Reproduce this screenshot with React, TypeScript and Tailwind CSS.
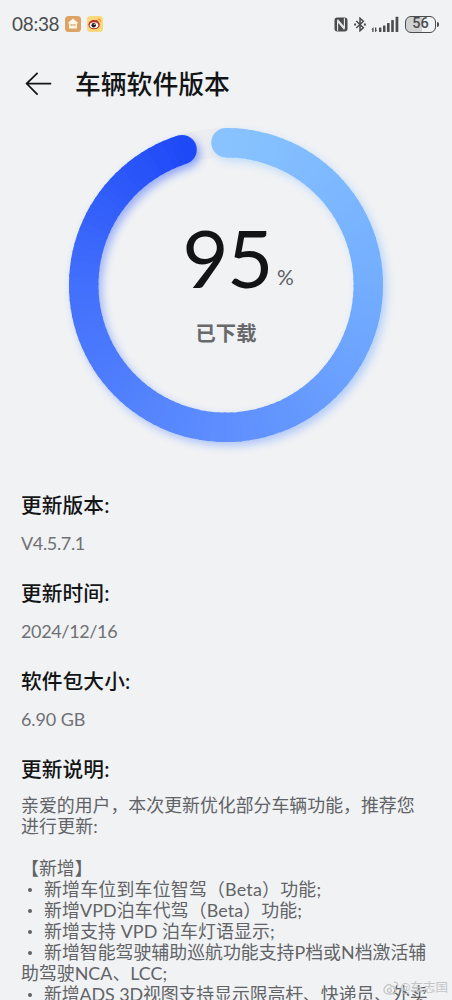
const PROGRESS = 95;
const CENTER = 180;
const RADIUS = 142.3;
const STEPS = 114;

// ring colours, clockwise from the top
const STOPS: [number, number[]][] = [
  [0, [136, 195, 255]],
  [0.26, [114, 172, 255]],
  [0.5, [94, 142, 254]],
  [0.75, [66, 111, 252]],
  [0.95, [30, 73, 247]],
];

const SECTIONS = [
  { title: '更新版本:', value: 'V4.5.7.1', tracking: 'tracking-[-0.35px]' },
  { title: '更新时间:', value: '2024/12/16', tracking: 'tracking-[-0.35px]' },
  { title: '软件包大小:', value: '6.90 GB', tracking: 'tracking-[-0.1px]' },
];

const NOTES = [
  { text: '亲爱的用户，本次更新优化部分车辆功能，推荐您', indent: false, tracking: '' },
  { text: '进行更新:', indent: false, tracking: 'tracking-[0.2px]' },
  { text: '', indent: false, tracking: '' },
  { text: '【新增】', indent: false, tracking: '' },
  { text: '新增车位到车位智驾（Beta）功能;', indent: true, tracking: 'tracking-[0.22px]' },
  { text: '新增VPD泊车代驾（Beta）功能;', indent: true, tracking: 'tracking-[0.1px]' },
  { text: '新增支持 VPD 泊车灯语显示;', indent: true, tracking: 'tracking-[0.1px]' },
  { text: '新增智能驾驶辅助巡航功能支持P档或N档激活辅', indent: true, tracking: '' },
  { text: '助驾驶NCA、LCC;', indent: false, tracking: '' },
  { text: '新增ADS 3D视图支持显示限高杆、快递员、外卖', indent: true, tracking: 'tracking-[-0.1px]' },
];

function colorAt(t: number) {
  let i = 0;
  while (i < STOPS.length - 2 && t > STOPS[i + 1][0]) i++;
  const [t0, c0] = STOPS[i];
  const [t1, c1] = STOPS[i + 1];
  const k = Math.min(1, (t - t0) / (t1 - t0));
  return `rgb(${c0.map((c, n) => Math.round(c + (c1[n] - c) * k)).join(',')})`;
}

function pointAt(t: number) {
  const a = t * Math.PI * 2;
  return { x: CENTER + RADIUS * Math.sin(a), y: CENTER - RADIUS * Math.cos(a) };
}

function Ring() {
  const total = PROGRESS / 100;
  const arcs = Array.from({ length: STEPS }, (_, i) => {
    const t = (i / STEPS) * total;
    const from = pointAt(t);
    const to = pointAt(Math.min(total, ((i + 1.3) / STEPS) * total));
    return { d: `M${from.x} ${from.y}A${RADIUS} ${RADIUS} 0 0 1 ${to.x} ${to.y}`, color: colorAt(t) };
  });
  const start = pointAt(0);
  const end = pointAt(total);

  return (
    <svg viewBox="0 0 360 360" className="col-start-1 row-start-1 h-[360px] w-[360px]">
      <defs>
        <filter id="glow" x="-10%" y="-10%" width="120%" height="120%">
          <feGaussianBlur stdDeviation="4" />
        </filter>
        <g id="arc" fill="none" strokeWidth="29.4">
          <circle cx={start.x} cy={start.y} r="14.7" fill={colorAt(0)} />
          <circle cx={end.x} cy={end.y} r="14.7" fill={colorAt(total)} />
          {arcs.map((a) => <path key={a.d} d={a.d} stroke={a.color} />)}
        </g>
      </defs>
      <circle cx={CENTER} cy={CENTER} r={RADIUS} fill="none" stroke="#ebedf0" strokeWidth="29.4" />
      <use href="#arc" x="3.5" y="4" filter="url(#glow)" opacity="0.45" />
      <use href="#arc" />
    </svg>
  );
}

function StatusBar() {
  return (
    <div className="flex h-12 items-center justify-between pl-3 pr-[13px] text-[#4b4c4e]">
      <div className="flex items-center">
        <span className="w-[48px] whitespace-nowrap text-[19px] tracking-[-0.3px]">08:38</span>
        <svg viewBox="0 0 16 16" className="ml-[5px] h-4 w-4">
          <rect width="16" height="16" rx="3.5" fill="#dca365" />
          <path d="M8 2.6 2.5 7.3h1.6v5.2h7.8V7.3h1.6z" fill="#fff7e8" />
          <path d="M6.2 8v2M8 8v2M9.8 8v2" stroke="#c98f50" strokeWidth=".9" />
        </svg>
        <svg viewBox="0 0 16 16" className="ml-[6px] h-4 w-4">
          <rect width="16" height="16" rx="3.5" fill="#fbd978" />
          <ellipse cx="7.1" cy="8.7" rx="5.7" ry="4.5" fill="#b9322b" />
          <path d="M3 5.8 6.2 3.7l1.5 1 2.4-.6.7 1.9z" fill="#b9322b" />
          <ellipse cx="7" cy="9.2" rx="4.3" ry="3" fill="#fff" />
          <circle cx="6.7" cy="9.2" r="2.2" fill="#29201e" />
          <circle cx="7.3" cy="8.5" r=".6" fill="#fff" />
          <path d="M10.4 3.2c2-.5 3.6 1 3.1 3" fill="none" stroke="#ef9a3c" strokeWidth="1.1" />
        </svg>
      </div>
      <div className="flex items-center">
        {/* NFC */}
        <svg viewBox="0 0 14 15" className="h-[15px] w-[14px]">
          <path d="M3.2.5h7.6a2.7 2.7 0 0 1 2.7 2.7v8.6a2.7 2.7 0 0 1-2.7 2.7H3.2A2.7 2.7 0 0 1 .5 11.8V3.2A2.7 2.7 0 0 1 3.2.5z" fill="currentColor" />
          <path d="M3.6 13.800V4.400l6.800 8M10.400 1.200v9.400l-6.800-8" fill="none" stroke="#f0f2f4" strokeWidth="1.1" />
        </svg>
        {/* Bluetooth */}
        <svg viewBox="0 0 12 15" className="ml-[6px] h-[15px] w-3" fill="none" stroke="currentColor" strokeWidth="1.5">
          <path d="m2.3 4 7 6.7L6 13.8V1.2l3.3 3.1-7 6.7" />
          <path d="M.1 7.5h2M9.9 7.5h2" strokeWidth="1.8" />
        </svg>
        {/* Signal */}
        <svg viewBox="0 0 28 17" className="ml-[5px] h-[17px] w-7" fill="currentColor">
          <path d="m2.1 11.5-1.8 2.1h1v2.5h1.3v-4.6zM4.5 16.1l1.8-2.1h-1v-2.5H4v4.6z" />
          <rect x="8" y="11.5" width="2.4" height="4.6" rx=".5" />
          <rect x="12" y="9.5" width="2.5" height="6.6" rx=".5" />
          <rect x="16" y="7" width="2.6" height="9.1" rx=".5" />
          <rect x="20.2" y="4" width="2.6" height="12.1" rx=".5" />
          <rect x="24.6" y="0.8" width="2.7" height="15.3" rx=".5" />
        </svg>
        <div className="ml-[6px] flex h-[17px] w-[31px] items-center justify-center rounded-[6px] border-[1.5px] border-[#4b4c4e] bg-linear-to-r from-[#cfd1d3] from-55% to-[#f0f2f4] to-55%">
          <span className="font-[Roboto,sans-serif] text-[14.5px] font-medium leading-none">56</span>
        </div>
        <div className="ml-px h-[5px] w-[2px] rounded-r bg-[#4b4c4e]" />
      </div>
    </div>
  );
}

export default function App() {
  return (
    <div className="relative h-[1000px] w-[452px] overflow-hidden bg-[#f0f2f4] font-[Lato,'Noto_Sans_CJK_SC',sans-serif] text-[#131415]">
      <StatusBar />

      <header className="flex h-[72px] items-center pl-[25px]">
        <svg viewBox="0 0 27 24" className="h-6 w-[27px]" fill="none" stroke="currentColor" strokeWidth="1.7">
          <path d="M12.6.8 1.6 11.6l11 11M1.6 11.6h24.6" />
        </svg>
        <h1 className="ml-[23px] mt-0.5 text-[25.8px] font-medium leading-none">车辆软件版本</h1>
      </header>

      <section className="-mt-[15px] grid h-[360px] w-[452px] justify-center">
        <Ring />
        <div className="col-start-1 row-start-1 flex flex-col items-center pt-[107px]">
          <div className="flex items-baseline pl-[24px]">
            <span className="text-[80px] leading-[90px] tracking-[-1.5px]">95</span>
            <span className="relative -top-[3px] ml-[5px] text-[21px] text-[#606164]">%</span>
          </div>
          <span className="mt-[18px] text-[20.3px] font-bold leading-[26px] text-[#68696b]">已下载</span>
        </div>
      </section>

      <main className="pl-[21px] pt-[27px]">
        {SECTIONS.map((s) => (
          <section key={s.title} className="h-[88px]">
            <h2 className="text-[20.7px] font-medium leading-[27px] tracking-[0.1px]">{s.title}</h2>
            <p className={`mt-[12px] text-[18px] leading-[24px] text-[#707174] ${s.tracking}`}>{s.value}</p>
          </section>
        ))}
        <h2 className="text-[20.7px] font-medium leading-[27px] tracking-[0.1px]">更新说明:</h2>
        <div className="mt-3 text-[17.9px] leading-[21px] text-[#626366]">
          {NOTES.map((n, i) => (
            <div key={i} className="flex h-[21px] whitespace-pre">
              {n.indent && (
                <span className="flex w-[23px] items-center pl-[7px]">
                  <span className="h-[4px] w-[4px] rounded-full bg-[#626366]" />
                </span>
              )}
              <span className={n.tracking}>{n.text}</span>
            </div>
          ))}
        </div>
      </main>

      {/* Watermark */}
      <div className="absolute left-[383px] top-[981px] flex items-center gap-px whitespace-nowrap text-[#c3c5c7]">
        <svg viewBox="0 0 16 14" className="h-[14px] w-4" fill="none" stroke="currentColor" strokeWidth="1.3">
          <path d="M6.2 3.5C3.5 3.8.9 6.6.9 9c0 2.6 2.7 4.2 5.7 4.2 3.7 0 6-2 6-4 0-1.4-1-2-1.8-2.2.6-1.5-.3-2.3-2.9-1.3.2-1.4-.4-2.3-1.7-2.2z" />
          <circle cx="6.4" cy="9.3" r="2" />
          <path d="M11 1.2c2.4-.4 4.3 1.5 3.8 3.9" />
        </svg>
        <span className="text-[12.5px] leading-[14px]">@车志国</span>
      </div>
    </div>
  );
}
